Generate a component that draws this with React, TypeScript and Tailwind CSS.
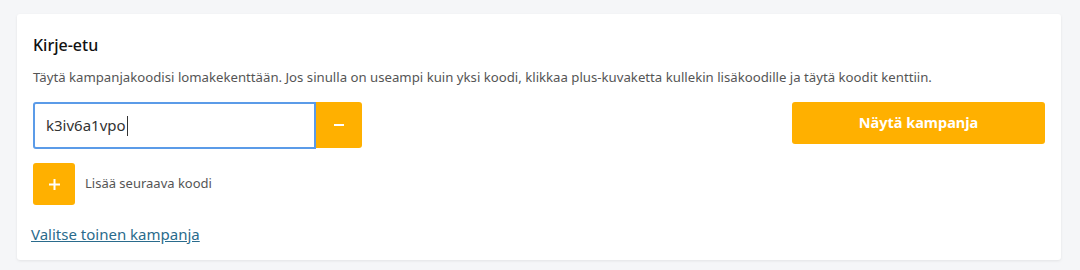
export default function App() {
  return (
    <div
      className="w-[1080px] h-[270px] bg-[#f5f6f8] pt-[14px] pl-[17px]"
      style={{ fontFamily: '"Noto Sans", "Open Sans", sans-serif' }}
    >
      <div className="w-[1044px] h-[246px] bg-white rounded-[3px] shadow-[0_1px_3px_rgba(0,0,0,0.08)] px-4 pt-[20px]">
        <h2 className="text-[16px] leading-[22px] font-medium text-[#111]">Kirje-etu</h2>
        <p className="mt-[12px] text-[13.2px] leading-[18px] text-[#555]">
          Täytä kampanjakoodisi lomakekenttään. Jos sinulla on useampi kuin yksi koodi, klikkaa plus-kuvaketta kullekin lisäkoodille ja täytä koodit kenttiin.
        </p>
        <div className="mt-[16px] flex items-start justify-between">
          <div className="flex">
            <div className="w-[283px] h-[47px] border-2 border-[#5b9be8] rounded-l-[3px] flex items-center pl-[11px] text-[15px] text-[#333]">
              k3iv6a1vpo
              <span className="w-px h-[20px] bg-[#333] ml-px" />
            </div>
            <button className="w-[46px] h-[46px] bg-[#ffb000] rounded-r-[3px] flex items-center justify-center">
              <span className="block w-[10px] h-[2px] bg-white" />
            </button>
          </div>
          <button className="w-[253px] h-[42px] bg-[#ffb000] rounded-[3px] text-white font-bold text-[14.5px]">
            Näytä kampanja
          </button>
        </div>
        <div className="mt-[14px] flex items-center gap-[10px]">
          <button className="w-[42px] h-[42px] bg-[#ffb000] rounded-[3px] flex items-center justify-center">
            <svg width="11" height="11" viewBox="0 0 11 11">
              <path d="M5.5 0v11M0 5.5h11" stroke="white" strokeWidth="2" />
            </svg>
          </button>
          <span className="text-[13px] text-[#555]">Lisää seuraava koodi</span>
        </div>
        <a href="#" className="block mt-[19px] -ml-[2px] text-[15px] leading-[20px] text-[#2a6b8c] underline">
          Valitse toinen kampanja
        </a>
      </div>
    </div>
  );
}
